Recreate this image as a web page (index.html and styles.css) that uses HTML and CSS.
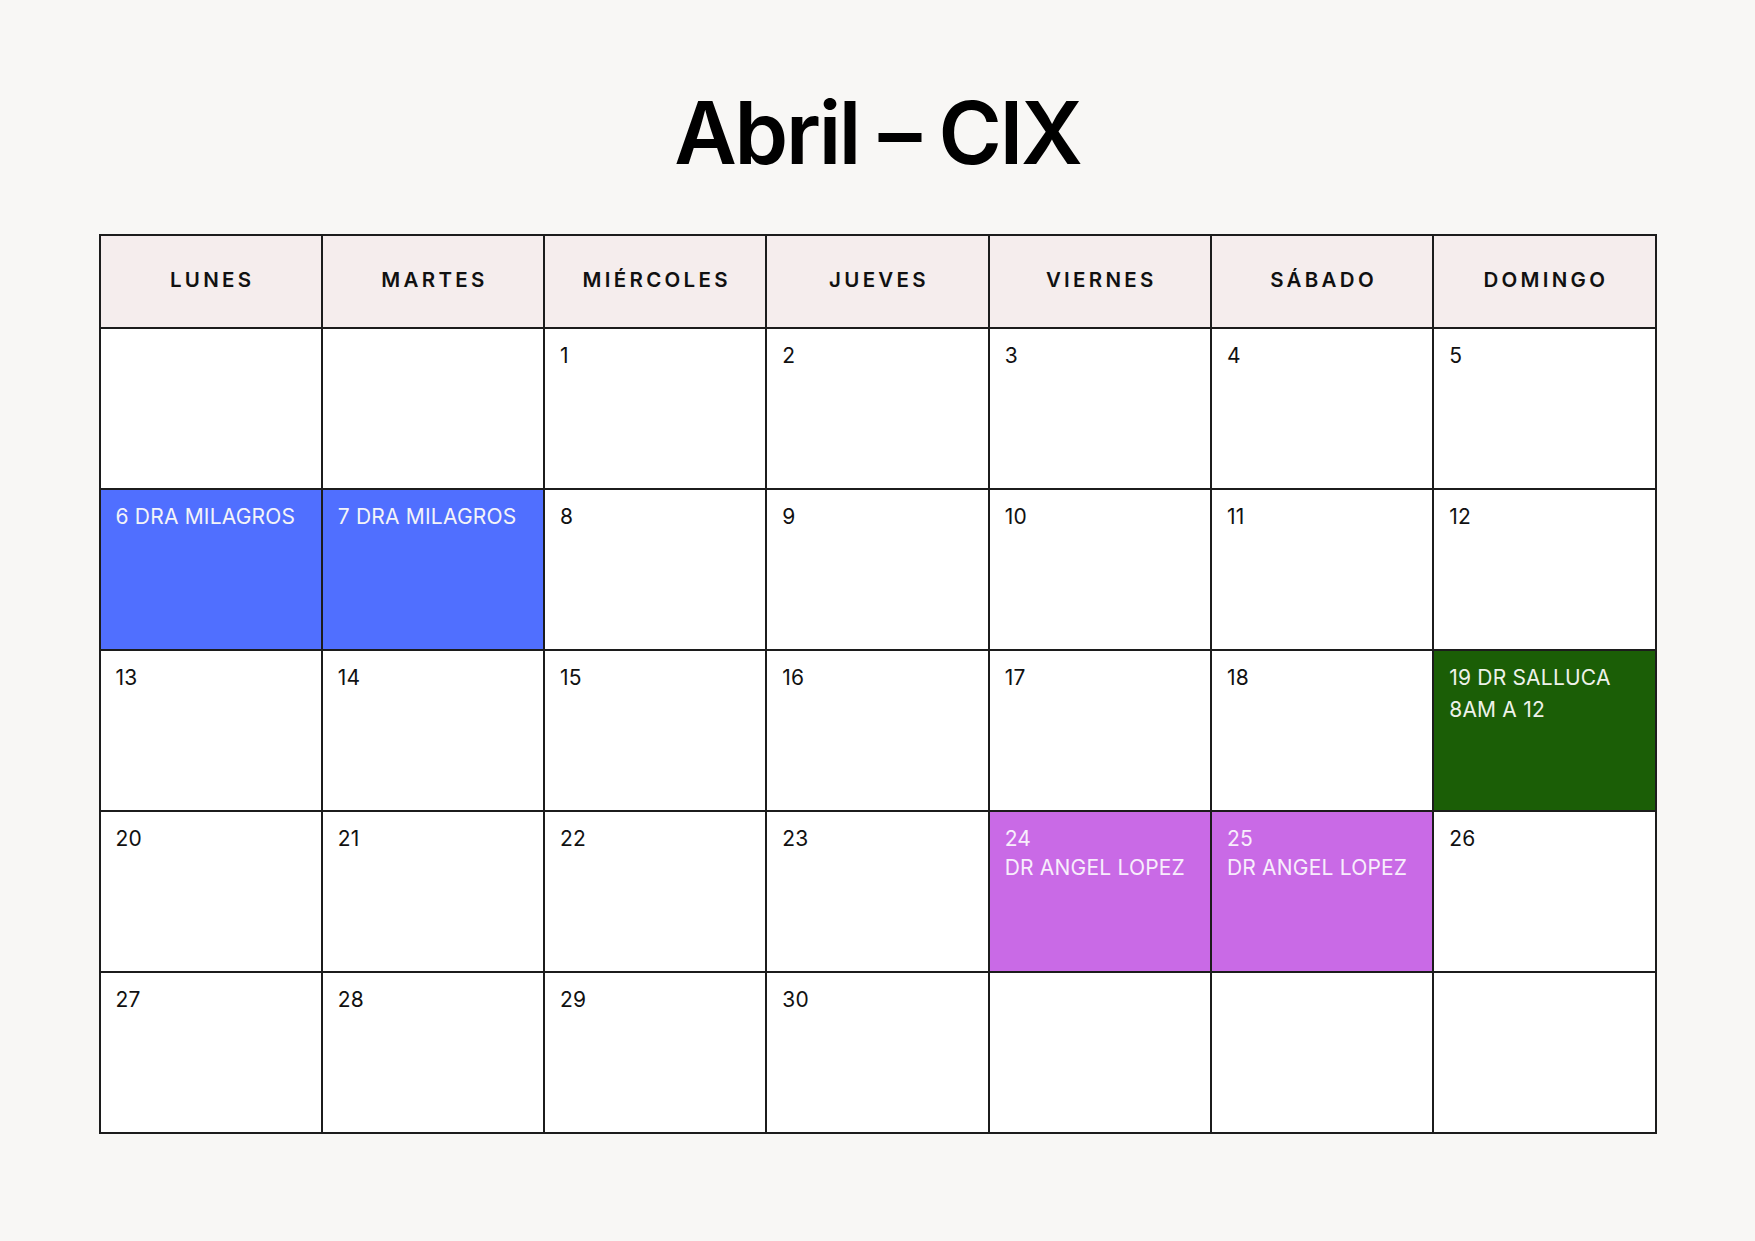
FILE: index.html
```html
<!DOCTYPE html>
<html lang="es">
<head>
<meta charset="utf-8">
<title>Abril - CIX</title>
<link rel="stylesheet" href="styles.css">
</head>
<body>
<main class="page">
  <h1 class="title">Abril – CIX</h1>
  <div class="calendar">
    <div class="head">LUNES</div>
    <div class="head">MARTES</div>
    <div class="head">MIÉRCOLES</div>
    <div class="head">JUEVES</div>
    <div class="head">VIERNES</div>
    <div class="head">SÁBADO</div>
    <div class="head">DOMINGO</div>

    <div class="day"></div>
    <div class="day"></div>
    <div class="day">1</div>
    <div class="day">2</div>
    <div class="day">3</div>
    <div class="day">4</div>
    <div class="day">5</div>

    <div class="day blue">6 DRA MILAGROS</div>
    <div class="day blue">7 DRA MILAGROS</div>
    <div class="day">8</div>
    <div class="day">9</div>
    <div class="day">10</div>
    <div class="day">11</div>
    <div class="day">12</div>

    <div class="day">13</div>
    <div class="day">14</div>
    <div class="day">15</div>
    <div class="day">16</div>
    <div class="day">17</div>
    <div class="day">18</div>
    <div class="day green">19 DR SALLUCA<br>8AM A 12</div>

    <div class="day">20</div>
    <div class="day">21</div>
    <div class="day">22</div>
    <div class="day">23</div>
    <div class="day purple">24<br>DR ANGEL LOPEZ</div>
    <div class="day purple">25<br>DR ANGEL LOPEZ</div>
    <div class="day">26</div>

    <div class="day">27</div>
    <div class="day">28</div>
    <div class="day">29</div>
    <div class="day">30</div>
    <div class="day"></div>
    <div class="day"></div>
    <div class="day"></div>
  </div>
</main>
</body>
</html>
```
FILE: styles.css
```css
html, body {
  margin: 0;
  padding: 0;
}
body {
  background: #f8f7f5;
  font-family: "Inter", "Liberation Sans", sans-serif;
  color: #111111;
  width: 1755px;
  height: 1241px;
  overflow: hidden;
}
.page {
  padding-top: 90px;
}
.title {
  margin: 0 0 57px 0;
  font-size: 86px;
  line-height: 1;
  height: 87px;
  font-weight: 600;
  text-align: center;
  letter-spacing: -2.3px;
  color: #000;
}
.calendar {
  width: 1558px;
  margin: 0 auto;
  display: grid;
  grid-template-columns: repeat(7, 1fr);
  grid-template-rows: 93px repeat(5, 161px);
  border-top: 2px solid #1c1c1c;
  border-left: 2px solid #1c1c1c;
  box-sizing: border-box;
}
.head,
.day {
  border-right: 2px solid #1c1c1c;
  border-bottom: 2px solid #1c1c1c;
}
.head {
  background: #f5eded;
  display: flex;
  align-items: center;
  justify-content: center;
  font-size: 20.5px;
  font-weight: 600;
  letter-spacing: 3.3px;
  padding-bottom: 5px;
  padding-left: 3px;
  box-sizing: border-box;
}
.day {
  background: #ffffff;
  font-size: 21px;
  line-height: 29px;
  letter-spacing: 0.2px;
  padding: 12px 14px 0 15px;
  box-sizing: border-box;
}
.blue {
  background: #506fff;
  color: #f4f4f8;
}
.green {
  background: #1b5e06;
  color: #eef2ea;
  line-height: 31.5px;
  padding-top: 11px;
}
.purple {
  background: #c96ae6;
  color: #f8eefc;
}
```
